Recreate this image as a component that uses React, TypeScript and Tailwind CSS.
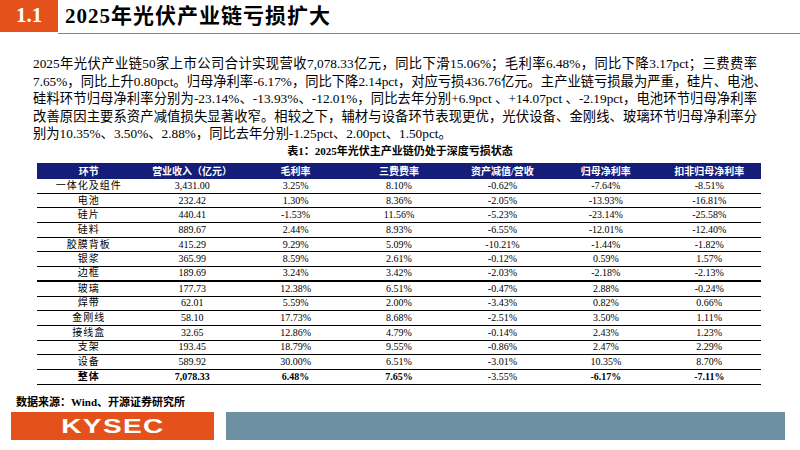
const serif = { fontFamily: '"Liberation Serif", "Noto Sans CJK SC", serif' };

const lines = [
  '2025年光伏产业链50家上市公司合计实现营收7,078.33亿元，同比下滑15.06%；毛利率6.48%，同比下降3.17pct；三费费率',
  '7.65%，同比上升0.80pct。归母净利率-6.17%，同比下降2.14pct，对应亏损436.76亿元。主产业链亏损最为严重，硅片、电池、',
  '硅料环节归母净利率分别为-23.14%、-13.93%、-12.01%，同比去年分别+6.9pct 、+14.07pct 、-2.19pct，电池环节归母净利率',
  '改善原因主要系资产减值损失显著收窄。相较之下，辅材与设备环节表现更优，光伏设备、金刚线、玻璃环节归母净利率分',
  '别为10.35%、3.50%、2.88%，同比去年分别-1.25pct、2.00pct、1.50pct。',
];

const head = ['环节', '营业收入（亿元）', '毛利率', '三费费率', '资产减值/营收', '归母净利率', '扣非归母净利率'];

const rows = [
  ['一体化及组件', '3,431.00', '3.25%', '8.10%', '-0.62%', '-7.64%', '-8.51%'],
  ['电池', '232.42', '1.30%', '8.36%', '-2.05%', '-13.93%', '-16.81%'],
  ['硅片', '440.41', '-1.53%', '11.56%', '-5.23%', '-23.14%', '-25.58%'],
  ['硅料', '889.67', '2.44%', '8.93%', '-6.55%', '-12.01%', '-12.40%'],
  ['胶膜背板', '415.29', '9.29%', '5.09%', '-10.21%', '-1.44%', '-1.82%'],
  ['银浆', '365.99', '8.59%', '2.61%', '-0.12%', '0.59%', '1.57%'],
  ['边框', '189.69', '3.24%', '3.42%', '-2.03%', '-2.18%', '-2.13%'],
  ['玻璃', '177.73', '12.38%', '6.51%', '-0.47%', '2.88%', '-0.24%'],
  ['焊带', '62.01', '5.59%', '2.00%', '-3.43%', '0.82%', '0.66%'],
  ['金刚线', '58.10', '17.73%', '8.68%', '-2.51%', '3.50%', '1.11%'],
  ['接线盒', '32.65', '12.86%', '4.79%', '-0.14%', '2.43%', '1.23%'],
  ['支架', '193.45', '18.79%', '9.55%', '-0.86%', '2.47%', '2.29%'],
  ['设备', '589.92', '30.00%', '6.51%', '-3.01%', '10.35%', '8.70%'],
  ['整体', '7,078.33', '6.48%', '7.65%', '-3.55%', '-6.17%', '-7.11%'],
];

function rowBorder(i: number) {
  if (i === 6) return 'border-b-2';
  if (i === rows.length - 1) return 'border-b-[1.5px]';
  return 'border-b';
}

export default function App() {
  return (
    <div className="relative h-[450px] w-[800px] overflow-hidden bg-white text-black" style={serif}>
      {/* 标题栏 */}
      <div className="flex h-[34px] items-start">
        <div className="flex h-[32px] w-[58px] items-center justify-center bg-[#e4511b] text-[21px] font-bold text-white">
          1.1
        </div>
        <div className="flex h-[33.5px] flex-1 items-center border-b-[1.5px] border-[#6f8894] pl-[7px] text-[21px] font-bold tracking-[1px]">
          2025年光伏产业链亏损扩大
        </div>
      </div>

      {/* 正文 */}
      <div className="mt-[21px] w-[757px] pl-[33px] text-[13.3px] leading-[17.5px]">
        {lines.map((l, i) => (
          <div
            key={i}
            className={i < lines.length - 1 ? 'whitespace-nowrap text-justify [text-align-last:justify]' : 'whitespace-nowrap'}
          >
            {l}
          </div>
        ))}
      </div>

      {/* 表格 */}
      <div className="text-center text-[11px] font-bold leading-[16px]">表1：2025年光伏主产业链仍处于深度亏损状态</div>
      <div className="ml-[37px] mt-[4.5px] w-[724px]">
        <div className="grid h-[16px] grid-cols-7 items-center bg-[#141d78] text-[10px] font-bold text-white">
          {head.map((h) => (
            <div key={h} className="text-center">
              {h}
            </div>
          ))}
        </div>
        {rows.map((r, i) => {
          const total = i === rows.length - 1;
          return (
            <div
              key={r[0]}
              className={`grid h-[14.7px] grid-cols-7 items-center border-black text-[10px] leading-none ${rowBorder(i)}`}
            >
              {r.map((c, j) => (
                <div key={j} className={`text-center ${total && j !== 4 ? 'font-bold' : ''} ${j === 0 ? 'tracking-[1px]' : ''}`}>
                  {c}
                </div>
              ))}
            </div>
          );
        })}
      </div>

      <div className="ml-[16px] mt-[9px] text-[11px] font-bold leading-[16px]">数据来源：Wind、开源证券研究所</div>

      {/* 页脚 */}
      <div className="mt-[2px] flex h-[28px] gap-[12px] pl-[11px]">
        <div className="flex w-[203px] items-center justify-center bg-[#e4511b]">
          <span
            className="inline-block scale-x-[1.4] text-[20px] font-bold leading-none tracking-[1px] text-white"
            style={{ fontFamily: '"Liberation Sans", Arial, sans-serif' }}
          >
            KYSEC
          </span>
        </div>
        <div className="w-[559px] bg-[#6d8fa2]" />
      </div>
    </div>
  );
}
